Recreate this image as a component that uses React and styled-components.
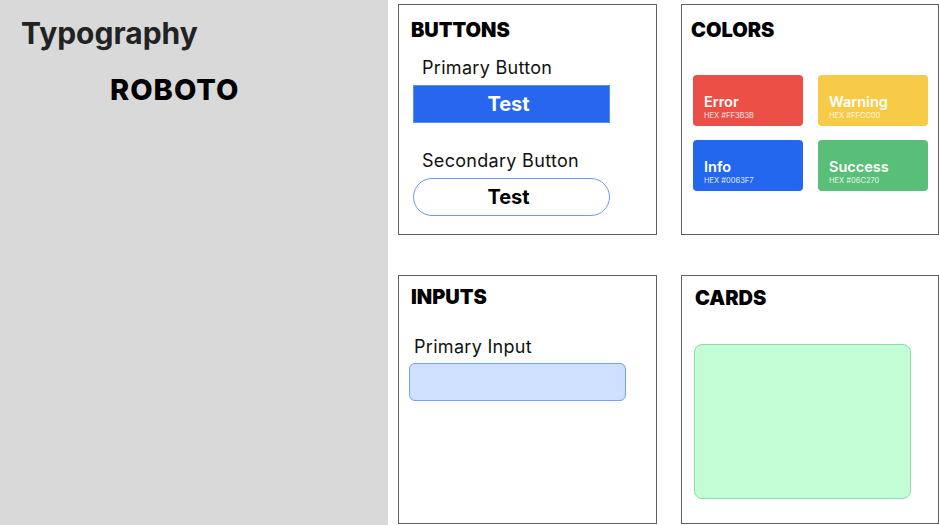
import React from "react";
import styled, { createGlobalStyle } from "styled-components";

const GlobalStyle = createGlobalStyle`
  body {
    margin: 0;
    font-family: "Inter", "Noto Sans", sans-serif;
    background: #fff;
  }
`;

const swatches = [
  { name: "Error", hex: "#FF3B3B", color: "#ec4f46" },
  { name: "Warning", hex: "#FFCC00", color: "#f7cb47" },
  { name: "Info", hex: "#0063F7", color: "#2367ef" },
  { name: "Success", hex: "#06C270", color: "#58be78" },
];

const App = () => {
  return (
    <>
      <GlobalStyle />
      <Page>
        <Sidebar>
          <PageTitle>Typography</PageTitle>
          <FontName>ROBOTO</FontName>
        </Sidebar>
        <Board>
          <Panel $pt={13} $pl={12}>
            <Heading>BUTTONS</Heading>
            <Label $mt={15} $ml={11}>Primary Button</Label>
            <PrimaryButton>Test</PrimaryButton>
            <Label $mt={27} $ml={11}>Secondary Button</Label>
            <SecondaryButton>Test</SecondaryButton>
          </Panel>
          <Panel $pt={13} $pl={9}>
            <Heading>COLORS</Heading>
            <Swatches>
              {swatches.map((s) => (
                <Swatch key={s.name} $bg={s.color}>
                  <SwatchName>{s.name}</SwatchName>
                  <SwatchHex>HEX {s.hex}</SwatchHex>
                </Swatch>
              ))}
            </Swatches>
          </Panel>
          <Panel $pt={9} $pl={12}>
            <Heading>INPUTS</Heading>
            <Label $mt={27} $ml={3}>Primary Input</Label>
            <TextInput />
          </Panel>
          <Panel $pt={10} $pl={13}>
            <Heading>CARDS</Heading>
            <Card />
          </Panel>
        </Board>
      </Page>
    </>
  );
};

export default App;

const Page = styled.div`
  display: flex;
  width: 939px;
  height: 525px;
  overflow: hidden;
`;

const Sidebar = styled.div`
  width: 388px;
  flex-shrink: 0;
  background: #d9d9d9;
  padding: 14px 0 0 21px;
  box-sizing: border-box;
`;

const PageTitle = styled.h1`
  margin: 0;
  font-size: 30px;
  font-weight: 700;
  line-height: 38px;
  color: #222;
`;

const FontName = styled.h2`
  margin: 21px 0 0 89px;
  font-size: 29px;
  font-weight: 800;
  line-height: 34px;
  letter-spacing: 1px;
  color: #000;
`;

const Board = styled.div`
  flex: 1;
  display: grid;
  grid-template-columns: 259px 258px;
  grid-template-rows: 231px 249px;
  column-gap: 24px;
  row-gap: 40px;
  padding: 4px 0 0 10px;
  background: #fff;
`;

const Panel = styled.section`
  box-sizing: border-box;
  border: 1px solid #606060;
  background: #fff;
  padding: ${(p) => p.$pt}px 0 0 ${(p) => p.$pl}px;
  display: flex;
  flex-direction: column;
  align-items: flex-start;
`;

const Heading = styled.h3`
  margin: 0;
  font-size: 20px;
  font-weight: 900;
  line-height: 24px;
  color: #000;
`;

const Label = styled.div`
  margin: ${(p) => p.$mt}px 0 0 ${(p) => p.$ml}px;
  font-size: 18px;
  line-height: 22px;
  letter-spacing: 0.3px;
  color: #111;
`;

const PrimaryButton = styled.button`
  margin: 6px 0 0 2px;
  width: 197px;
  height: 38px;
  border: 1px solid #5b8ff3;
  background: #2767f0;
  color: #fff;
  font-family: "Inter", sans-serif;
  font-size: 20px;
  font-weight: 700;
  padding: 0 6px 0 0;
`;

const SecondaryButton = styled(PrimaryButton)`
  margin-top: 6px;
  border: 1.5px solid #6c9af3;
  border-radius: 19px;
  background: #fff;
  color: #000;
`;

const Swatches = styled.div`
  margin: 33px 0 0 2px;
  display: grid;
  grid-template-columns: 110px 110px;
  grid-auto-rows: 51px;
  column-gap: 15px;
  row-gap: 14px;
`;

const Swatch = styled.div`
  background: ${(p) => p.$bg};
  border-radius: 4px;
  padding: 18px 0 0 11px;
  box-sizing: border-box;
  color: #fff;
`;

const SwatchName = styled.div`
  font-size: 14.5px;
  font-weight: 600;
  line-height: 17px;
`;

const SwatchHex = styled.div`
  margin-top: 1px;
  font-size: 7.5px;
  line-height: 9px;
  opacity: 0.85;
`;

const TextInput = styled.input`
  margin: 5px 0 0 -2px;
  width: 217px;
  height: 38px;
  box-sizing: border-box;
  border: 1.5px solid #74a0f6;
  border-radius: 6px;
  background: #cedfff;
  outline: none;
`;

const Card = styled.div`
  margin: 34px 0 0 -1px;
  width: 217px;
  height: 155px;
  box-sizing: border-box;
  border: 1.5px solid #8fdca8;
  border-radius: 8px;
  background: #c2fdd5;
`;
